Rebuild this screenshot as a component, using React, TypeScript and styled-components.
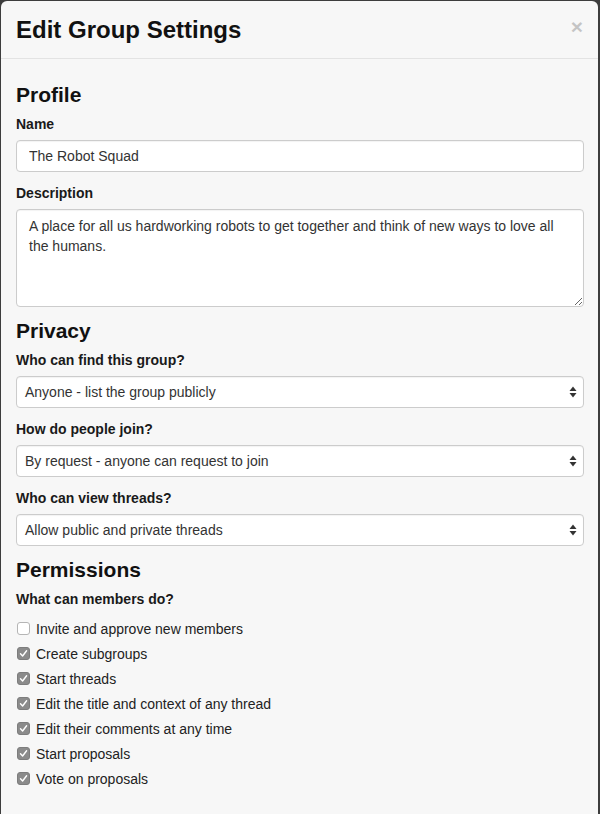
import styled, { createGlobalStyle } from 'styled-components';

const GlobalStyle = createGlobalStyle`
  html, body {
    margin: 0;
    padding: 0;
    background: #3d3d3d;
  }
  body {
    font-family: 'Liberation Sans', Arial, sans-serif;
    color: #333;
  }
`;

const Modal = styled.div`
  margin: 1px 2px 0 1px;
  min-height: 813px;
  background: #f7f7f7;
  border-radius: 6px 6px 0 0;
  box-sizing: border-box;
`;

const Header = styled.div`
  display: flex;
  align-items: flex-start;
  justify-content: space-between;
  padding: 15px 15px 14px;
  border-bottom: 1px solid #e3e3e3;
`;

const Title = styled.h2`
  margin: 0;
  font-size: 24px;
  line-height: 28px;
  font-weight: 700;
  color: #111;
`;

const Close = styled.button`
  border: 0;
  background: none;
  padding: 0;
  margin-top: 1px;
  font-family: 'Liberation Sans', Arial, sans-serif;
  font-size: 21px;
  font-weight: 700;
  line-height: 20px;
  color: #000;
  opacity: 0.2;
  cursor: pointer;
`;

const Body = styled.div`
  padding: 24px 14px 20px 15px;
`;

const SectionTitle = styled.h3<{ $first?: boolean }>`
  margin: 0 0 7px;
  padding-top: ${(p) => (p.$first ? 0 : 1)}px;
  font-size: 21px;
  line-height: 24px;
  font-weight: 700;
  color: #111;
`;

const Group = styled.div<{ $last?: boolean }>`
  margin-bottom: ${(p) => (p.$last ? 0 : 11)}px;
`;

const Label = styled.label`
  display: block;
  margin-bottom: 6px;
  font-size: 14px;
  line-height: 20px;
  font-weight: 700;
  color: #1a1a1a;
`;

const fieldBase = `
  box-sizing: border-box;
  width: 100%;
  background: #fff;
  border: 1px solid #ccc;
  border-radius: 4px;
  box-shadow: inset 0 1px 1px rgba(0, 0, 0, 0.05);
  font-family: 'Liberation Sans', Arial, sans-serif;
  font-size: 14px;
  color: #333;
`;

const TextInput = styled.input`
  ${fieldBase}
  display: block;
  height: 32px;
  padding: 0 12px;
  outline: none;
`;

const TextArea = styled.textarea`
  ${fieldBase}
  display: block;
  height: 98px;
  padding: 6px 12px;
  line-height: 20px;
  resize: vertical;
  outline: none;
`;

const Select = styled.div`
  ${fieldBase}
  display: flex;
  align-items: center;
  justify-content: space-between;
  height: 32px;
  padding: 0 6px 0 8px;
`;

const Checks = styled.ul`
  list-style: none;
  margin: 7px 0 0;
  padding: 0;
`;

const CheckRow = styled.li`
  display: flex;
  align-items: center;
  height: 25px;
  font-size: 14px;
  color: #222;
`;

const Box = styled.span<{ $on: boolean }>`
  box-sizing: border-box;
  display: inline-flex;
  align-items: center;
  justify-content: center;
  width: 13px;
  height: 13px;
  margin: 0 6px 0 1px;
  border-radius: 3px;
  background: ${(p) => (p.$on ? '#8b8b8b' : '#fff')};
  border: 1px solid ${(p) => (p.$on ? '#7d7d7d' : '#b5b5b5')};
`;

function Arrows() {
  return (
    <svg width="8" height="12" viewBox="0 0 8 12">
      <path d="M4 0.5 L7.5 5 H0.5 Z" fill="#333" />
      <path d="M4 11.5 L7.5 7 H0.5 Z" fill="#333" />
    </svg>
  );
}

function Check() {
  return (
    <svg width="9" height="9" viewBox="0 0 9 9">
      <path d="M1.5 4.8 L3.6 7 L7.6 1.8" stroke="#fff" strokeWidth="1.4" fill="none" strokeLinecap="round" strokeLinejoin="round" />
    </svg>
  );
}

const permissions: [string, boolean][] = [
  ['Invite and approve new members', false],
  ['Create subgroups', true],
  ['Start threads', true],
  ['Edit the title and context of any thread', true],
  ['Edit their comments at any time', true],
  ['Start proposals', true],
  ['Vote on proposals', true],
];

export default function App() {
  return (
    <>
      <GlobalStyle />
      <Modal>
        <Header>
          <Title>Edit Group Settings</Title>
          <Close aria-label="Close">×</Close>
        </Header>
        <Body>
          <SectionTitle $first>Profile</SectionTitle>
          <Group>
            <Label>Name</Label>
            <TextInput defaultValue="The Robot Squad" />
          </Group>
          <Group>
            <Label>Description</Label>
            <TextArea defaultValue="A place for all us hardworking robots to get together and think of new ways to love all the humans." />
          </Group>

          <SectionTitle>Privacy</SectionTitle>
          <Group>
            <Label>Who can find this group?</Label>
            <Select>
              <span>Anyone - list the group publicly</span>
              <Arrows />
            </Select>
          </Group>
          <Group>
            <Label>How do people join?</Label>
            <Select>
              <span>By request - anyone can request to join</span>
              <Arrows />
            </Select>
          </Group>
          <Group>
            <Label>Who can view threads?</Label>
            <Select>
              <span>Allow public and private threads</span>
              <Arrows />
            </Select>
          </Group>

          <SectionTitle>Permissions</SectionTitle>
          <Group $last>
            <Label>What can members do?</Label>
            <Checks>
              {permissions.map(([text, on]) => (
                <CheckRow key={text}>
                  <Box $on={on}>{on && <Check />}</Box>
                  {text}
                </CheckRow>
              ))}
            </Checks>
          </Group>
        </Body>
      </Modal>
    </>
  );
}
